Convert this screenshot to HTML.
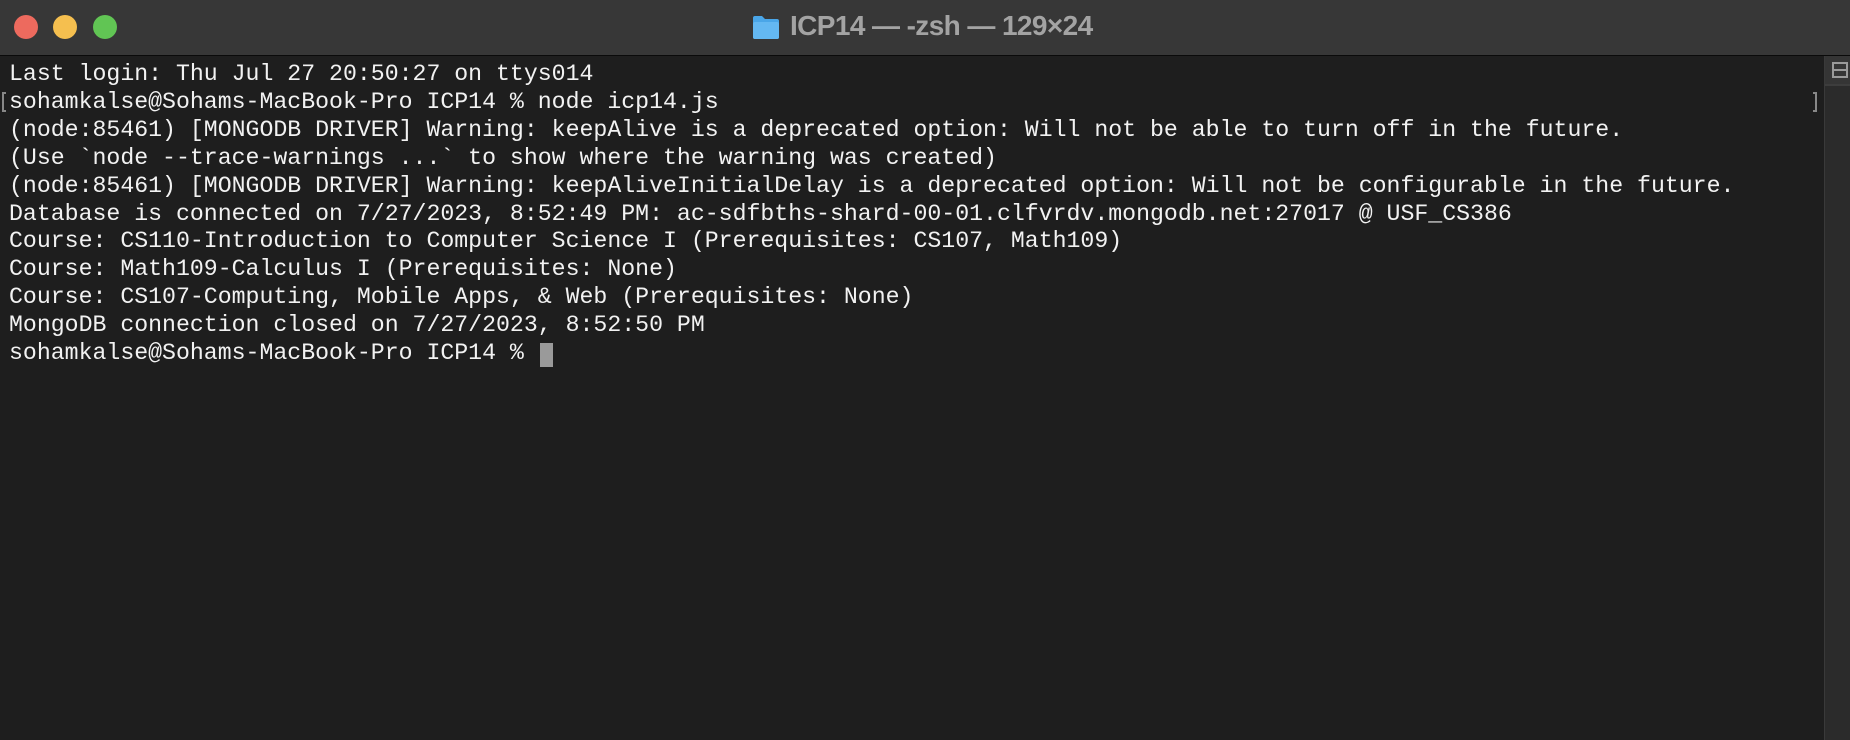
<!DOCTYPE html>
<html><head><meta charset="utf-8"><style>
html,body{margin:0;padding:0;width:1850px;height:740px;overflow:hidden;background:#1e1e1e}
.title{position:absolute;left:0;top:0;width:1850px;height:55px;background:#373737;border-bottom:1px solid #0a0a0a}
.dot{position:absolute;top:15px;width:24px;height:24px;border-radius:50%}
.t{position:absolute;left:790px;top:10px;font:bold 28px "Liberation Sans",sans-serif;color:#a3a3a3;letter-spacing:-0.6px}
.term{position:absolute;left:9px;top:61px;font-family:"Liberation Mono",monospace;font-size:23.2px;line-height:27.9px;color:#f2f2f2;white-space:pre}
.sb{position:absolute;left:1824px;top:56px;width:26px;height:684px;background:#2b2b2b;border-left:1px solid #3a3a3a}
</style></head><body>
<div class="title">
<div class="dot" style="left:14px;background:#ed6a5e"></div>
<div class="dot" style="left:53px;background:#f5bf4f"></div>
<div class="dot" style="left:93px;background:#61c554"></div>
<svg style="position:absolute;left:752px;top:14px" width="28" height="26" viewBox="0 0 28 26"><path d="M1 4a2 2 0 0 1 2-2h7l3 3h12a2 2 0 0 1 2 2v16a2 2 0 0 1-2 2H3a2 2 0 0 1-2-2z" fill="#4aa6e8"/><rect x="1" y="8" width="26" height="17" rx="2" fill="#64b8f2"/></svg>
<div class="t">ICP14 — -zsh — 129×24</div>
</div>
<div class="sb"><div style="position:absolute;left:0;top:0;width:26px;height:28px;background:#353535"></div><div style="position:absolute;left:7px;top:6px;width:16px;height:16px;border:2px solid #9a9a9a;box-sizing:border-box"><div style="margin-top:5px;height:2px;background:#9a9a9a"></div></div><div style="position:absolute;left:0;top:28px;width:26px;height:2px;background:#3d3d3d"></div></div>
<div style="position:absolute;left:2px;top:92px;width:4px;height:20px;border:2px solid #888;border-right:none;box-sizing:border-box"></div>
<div style="position:absolute;left:1813px;top:92px;width:4px;height:20px;border:2px solid #888;border-left:none;box-sizing:border-box"></div>
<div class="term">Last login: Thu Jul 27 20:50:27 on ttys014
sohamkalse@Sohams-MacBook-Pro ICP14 % node icp14.js
(node:85461) [MONGODB DRIVER] Warning: keepAlive is a deprecated option: Will not be able to turn off in the future.
(Use `node --trace-warnings ...` to show where the warning was created)
(node:85461) [MONGODB DRIVER] Warning: keepAliveInitialDelay is a deprecated option: Will not be configurable in the future.
Database is connected on 7/27/2023, 8:52:49 PM: ac-sdfbths-shard-00-01.clfvrdv.mongodb.net:27017 @ USF_CS386
Course: CS110-Introduction to Computer Science I (Prerequisites: CS107, Math109)
Course: Math109-Calculus I (Prerequisites: None)
Course: CS107-Computing, Mobile Apps, &amp; Web (Prerequisites: None)
MongoDB connection closed on 7/27/2023, 8:52:50 PM
sohamkalse@Sohams-MacBook-Pro ICP14 % </div>
<div style="position:absolute;left:540px;top:343px;width:13px;height:24px;background:#9a9a9a"></div>
</body></html>
